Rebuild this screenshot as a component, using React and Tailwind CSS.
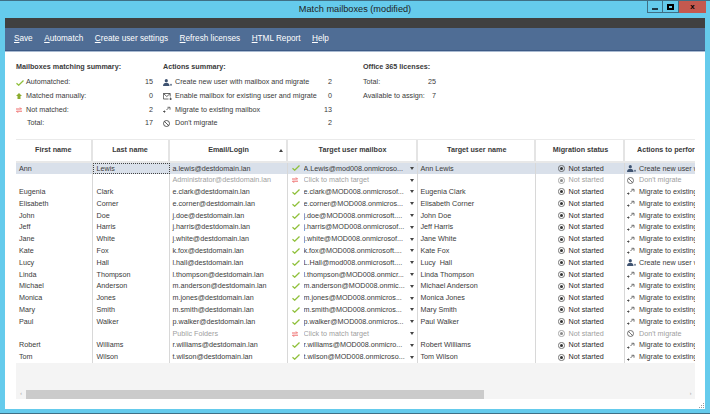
import React from "react";

const Check = () => (
  <svg width="8" height="6" viewBox="0 0 8 6" className="shrink-0"><path d="M.5 3.300 L2.700 5.200 L7.500 .5" fill="none" stroke="#8fc03a" strokeWidth="1.300" /></svg>
);
const NotMatched = () => (
  <svg width="6" height="6" viewBox="0 0 6 6" className="shrink-0"><path d="M0 2h5.500M4 .5 5.500 2M6 4.200H.5M2 5.700 .5 4.200" fill="none" stroke="#ee6a6a" strokeWidth="1" /></svg>
);
const Manual = () => (
  <svg width="6" height="6" viewBox="0 0 6 6" className="shrink-0"><path d="M3 0 6 3H4.500V6H1.500V3H0Z" fill="#8bac2f" /></svg>
);
const UserAdd = () => (
  <svg width="9" height="7" viewBox="0 0 9 7" className="shrink-0"><circle cx="3.300" cy="1.700" r="1.600" fill="#3f5371" /><path d="M0 7C0 4.500 1.500 3.800 3.300 3.800S6.500 4.500 6.500 7Z" fill="#3f5371" /><path d="M7 5.800h2M8 4.800v2" stroke="#3f5371" strokeWidth=".7" /></svg>
);
const Mail = () => (
  <svg width="9" height="7" viewBox="0 0 9 7" className="shrink-0"><path d="M5.500 6H.4V.5h6.800v3M.4.5 3.800 3.500 7.200.5M7.500 4.500v2.500M6.500 6H9" fill="none" stroke="#444" strokeWidth=".8" /></svg>
);
const Migrate = () => (
  <svg width="8" height="7" viewBox="0 0 8 7" className="shrink-0"><path d="M0 5.500h2.500M1.500 4.500v2.200M3.500 4 5.500 2M4.500 1.300h2.500v2.400" fill="none" stroke="#444" strokeWidth=".8" /></svg>
);
const Ban = ({ dim }) => (
  <svg width="7" height="7" viewBox="0 0 7 7" className="shrink-0"><circle cx="3.500" cy="3.500" r="3" fill="none" stroke={dim ? "#555" : "#333"} strokeWidth=".8" /><path d="M1.400 1.400l4.200 4.200" stroke={dim ? "#555" : "#333"} strokeWidth=".8" /></svg>
);
const Status = ({ dim }) => (
  <svg width="7" height="7" viewBox="0 0 7 7" className="shrink-0"><circle cx="3.500" cy="3.500" r="3.100" fill="none" stroke={dim ? "#888" : "#444"} strokeWidth=".7" /><circle cx="3.500" cy="3.500" r="1.500" fill={dim ? "#888" : "#333"} /></svg>
);
const Caret = () => (
  <div className="w-0 h-0 border-x-[2.500px] border-x-transparent border-t-[3px] border-t-[#444] shrink-0" />
);

const people = [
  ["Ann", "Lewis", "a.lewis@destdomain.lan", "A.Lewis@mod008.onmicroso...", "Ann Lewis", "new"],
  ["", "", "Administrator@destdomain.lan", "", "", "dont"],
  ["Eugenia", "Clark", "e.clark@destdomain.lan", "e.clark@MOD008.onmicrosof...", "Eugenia Clark", "mig"],
  ["Elisabeth", "Corner", "e.corner@destdomain.lan", "e.corner@MOD008.onmicros...", "Elisabeth Corner", "mig"],
  ["John", "Doe", "j.doe@destdomain.lan", "j.doe@MOD008.onmicrosoft....", "John Doe", "mig"],
  ["Jeff", "Harris", "j.harris@destdomain.lan", "j.harris@MOD008.onmicrosof...", "Jeff Harris", "mig"],
  ["Jane", "White", "j.white@destdomain.lan", "j.white@MOD008.onmicrosof...", "Jane White", "mig"],
  ["Kate", "Fox", "k.fox@destdomain.lan", "k.fox@MOD008.onmicrosoft....", "Kate Fox", "mig"],
  ["Lucy", "Hall", "l.hall@destdomain.lan", "L.Hall@mod008.onmicrosoft....", "Lucy  Hall", "new"],
  ["Linda", "Thompson", "l.thompson@destdomain.lan", "l.thompson@MOD008.onmicr...", "Linda Thompson", "mig"],
  ["Michael", "Anderson", "m.anderson@destdomain.lan", "m.anderson@MOD008.onmic...", "Michael Anderson", "mig"],
  ["Monica", "Jones", "m.jones@destdomain.lan", "m.jones@MOD008.onmicros...", "Monica Jones", "mig"],
  ["Mary", "Smith", "m.smith@destdomain.lan", "m.smith@MOD008.onmicros...", "Mary Smith", "mig"],
  ["Paul", "Walker", "p.walker@destdomain.lan", "p.walker@MOD008.onmicros...", "Paul Walker", "mig"],
  ["", "", "Public Folders", "", "", "dont"],
  ["Robert", "Williams", "r.williams@destdomain.lan", "r.williams@MOD008.onmicro...", "Robert Williams", "mig"],
  ["Tom", "Wilson", "t.wilson@destdomain.lan", "t.wilson@MOD008.onmicroso...", "Tom Wilson", "mig"],
];

const cols = "grid grid-cols-[76.500px_77px_118px_130px_118.500px_89px_70px]";

function Row({ p, i }) {
  const dim = p[5] === "dont";
  const selected = i === 0;
  return (
    <div className={`${cols} h-[11.800px] leading-[11.800px] whitespace-pre overflow-hidden ${selected ? "bg-[#d9e0ea]" : ""} ${dim ? "text-[#a0a0a0]" : "text-[#3a3a3a]"}`}>
      <div className="pl-[3px] border-r border-[#d8d8d8] overflow-hidden">{p[0]}</div>
      <div className={`overflow-hidden ${selected ? "border border-dotted border-[#444] leading-[10px] pl-[3px]" : "pl-[4px] border-r border-[#d8d8d8]"}`}>{p[1]}</div>
      <div className="pl-[3px] border-r border-[#d8d8d8] overflow-hidden">{p[2]}</div>
      <div className="flex items-center pl-[4px] pr-[3px] border-r border-[#d8d8d8] overflow-hidden">
        <span className="w-[12px] flex shrink-0 justify-start">{dim ? <NotMatched /> : <Check />}</span>
        <span className="flex-1 overflow-hidden">{dim ? <span className="text-[#a0a0a0]">Click to match target</span> : p[3]}</span>
        <Caret />
      </div>
      <div className="pl-[3px] border-r border-[#d8d8d8] overflow-hidden">{p[4]}</div>
      <div className="flex items-center pl-[22px] gap-[3.500px] border-r border-[#d8d8d8] overflow-hidden">
        <Status dim={dim} />
        <span className={dim ? "" : "text-[#2a2a2a]"}>Not started</span>
      </div>
      <div className="flex items-center pl-[1.500px] overflow-hidden">
        <span className="w-[12.500px] flex shrink-0">
          {p[5] === "new" ? <UserAdd /> : p[5] === "dont" ? <Ban dim /> : <Migrate />}
        </span>
        <span>{p[5] === "new" ? "Create new user with mailbox" : p[5] === "dont" ? "Don't migrate" : "Migrate to existing mailbox"}</span>
      </div>
    </div>
  );
}

const menu = ["Save", "Automatch", "Create user settings", "Refresh licenses", "HTML Report", "Help"];

function Menu({ t }) {
  return (
    <span><span className="underline">{t[0]}</span>{t.slice(1)}</span>
  );
}

export default function App() {
  return (
    <div className="w-[710px] h-[414px] overflow-hidden flex flex-col bg-[#65cbec] border-t border-t-[#3f6f85] border-b border-b-[#3f6f85] text-[7.200px] text-[#3a3a3a]" style={{ fontFamily: '"Liberation Sans", sans-serif' }}>
      <div className="h-[17px] relative flex items-center justify-center text-[9.200px] text-[#222] shrink-0">
        Match mailboxes (modified)
        <div className="absolute right-[4px] top-0 flex h-[12px]">
          <div className="w-[16px] border-x border-b border-[#3f6f85] flex items-end justify-center pb-[2px]"><div className="w-[6px] h-[2px] bg-[#1d3a48]" /></div>
          <div className="w-[16px] border-r border-b border-[#3f6f85] flex items-center justify-center"><div className="w-[7px] h-[6px] border-2 border-black" /></div>
          <div className="w-[27px] bg-[#c4594f] flex items-center justify-center text-[8px] font-bold text-black">x</div>
        </div>
      </div>
      <div className="flex-1 mx-[5px] mb-[4px] flex flex-col min-h-0">
        <div className="h-[10px] bg-[#404040] shrink-0" />
        <div className="h-[23px] bg-[#4f6d95] border-b border-b-[#3d5a85] shrink-0 flex items-center pl-[9px] gap-[11.500px] text-[8.200px] text-white">
          {menu.map((t) => <Menu key={t} t={t} />)}
        </div>
        <div className="h-[1px] bg-[#a9bad1] shrink-0" />
        <div className="flex-1 bg-white flex flex-col min-h-0 pl-[11px] pr-[10px] relative">
          <div className="h-[87px] shrink-0 flex pt-[10px]">
            <div className="w-[147px] flex flex-col">
              <div className="h-[14px] font-bold">Mailboxes matching summary:</div>
              {[["Automatched:", "15", <Check key="a" />], ["Matched manually:", "0", <Manual key="b" />], ["Not matched:", "2", <NotMatched key="c" />], ["Total:", "17", null]].map(([a, b, ic]) => (
                <div key={a} className="h-[13.600px] flex items-center">
                  <span className="w-[10px] flex shrink-0">{ic}</span>
                  <span className={`flex-1 ${ic ? "" : "pl-[1px]"}`}>{a}</span>
                  <span className="w-[10px] text-right mr-[10px]">{b}</span>
                </div>
              ))}
            </div>
            <div className="w-[200px] flex flex-col">
              <div className="h-[14px] font-bold">Actions summary:</div>
              {[["Create new user with mailbox and migrate", "2", <UserAdd key="a" />], ["Enable mailbox for existing user and migrate", "0", <Mail key="b" />], ["Migrate to existing mailbox", "13", <Migrate key="c" />], ["Don't migrate", "2", <Ban key="d" />]].map(([a, b, ic]) => (
                <div key={a} className="h-[13.600px] flex items-center">
                  <span className="w-[12px] flex shrink-0">{ic}</span>
                  <span className="flex-1 whitespace-nowrap">{a}</span>
                  <span className="w-[12px] text-right mr-[31px]">{b}</span>
                </div>
              ))}
            </div>
            <div className="w-[73px] flex flex-col">
              <div className="h-[14px] font-bold whitespace-nowrap">Office 365 licenses:</div>
              <div className="h-[13.600px] flex items-center justify-between"><span>Total:</span><span>25</span></div>
              <div className="h-[13.600px] flex items-center justify-between whitespace-nowrap"><span>Available to assign:</span><span>7</span></div>
            </div>
          </div>
          <div className="w-[679px] h-[260px] shrink-0 flex flex-col overflow-hidden bg-[#f4f4f4]">
            <div className={`${cols} h-[23.500px] shrink-0 bg-white border-t border-[#eaeaea] border-b-2 border-b-[#e8e8e8] font-bold items-stretch whitespace-nowrap overflow-hidden`}>
              {["First name", "Last name", "Email/Login", "Target user mailbox", "Target user name", "Migration status", "Actions to perform"].map((h, i) => (
                <div key={h} className={`relative flex items-center overflow-hidden ${i === 6 ? "pl-[12px]" : i >= 2 ? "justify-center pl-[2px] border-r-2 border-[#e4e4e4]" : "justify-center border-r-2 border-[#e4e4e4]"}`}>
                  {h}
                  {i === 2 && <div className="absolute right-[3px] top-[9px] w-0 h-0 border-x-[2.500px] border-x-transparent border-b-[3px] border-b-[#444]" />}
                </div>
              ))}
            </div>
            <div className="bg-white shrink-0">
              {people.map((p, i) => <Row key={i} p={p} i={i} />)}
            </div>
            <div className="h-[26.500px] shrink-0" />
            <div className="h-[9px] shrink-0 flex bg-[#f4f4f4]">
              <div className="w-[10px] flex items-center justify-center text-[5px] text-[#999]">‹</div>
              <div className="w-[458px] bg-[#cbcbcb]" />
              <div className="flex-1" />
              <div className="w-[9px] flex items-center justify-center text-[5px] text-[#999]">›</div>
            </div>
          </div>
          <svg width="6" height="6" viewBox="0 0 6 6" className="absolute right-0 bottom-0">
            <path d="M4 0h1v1H4ZM2 2h1v1H2ZM4 2h1v1H4ZM0 4h1v1H0ZM2 4h1v1H2ZM4 4h1v1H4Z" fill="#9a9a9a" />
          </svg>
        </div>
      </div>
    </div>
  );
}
